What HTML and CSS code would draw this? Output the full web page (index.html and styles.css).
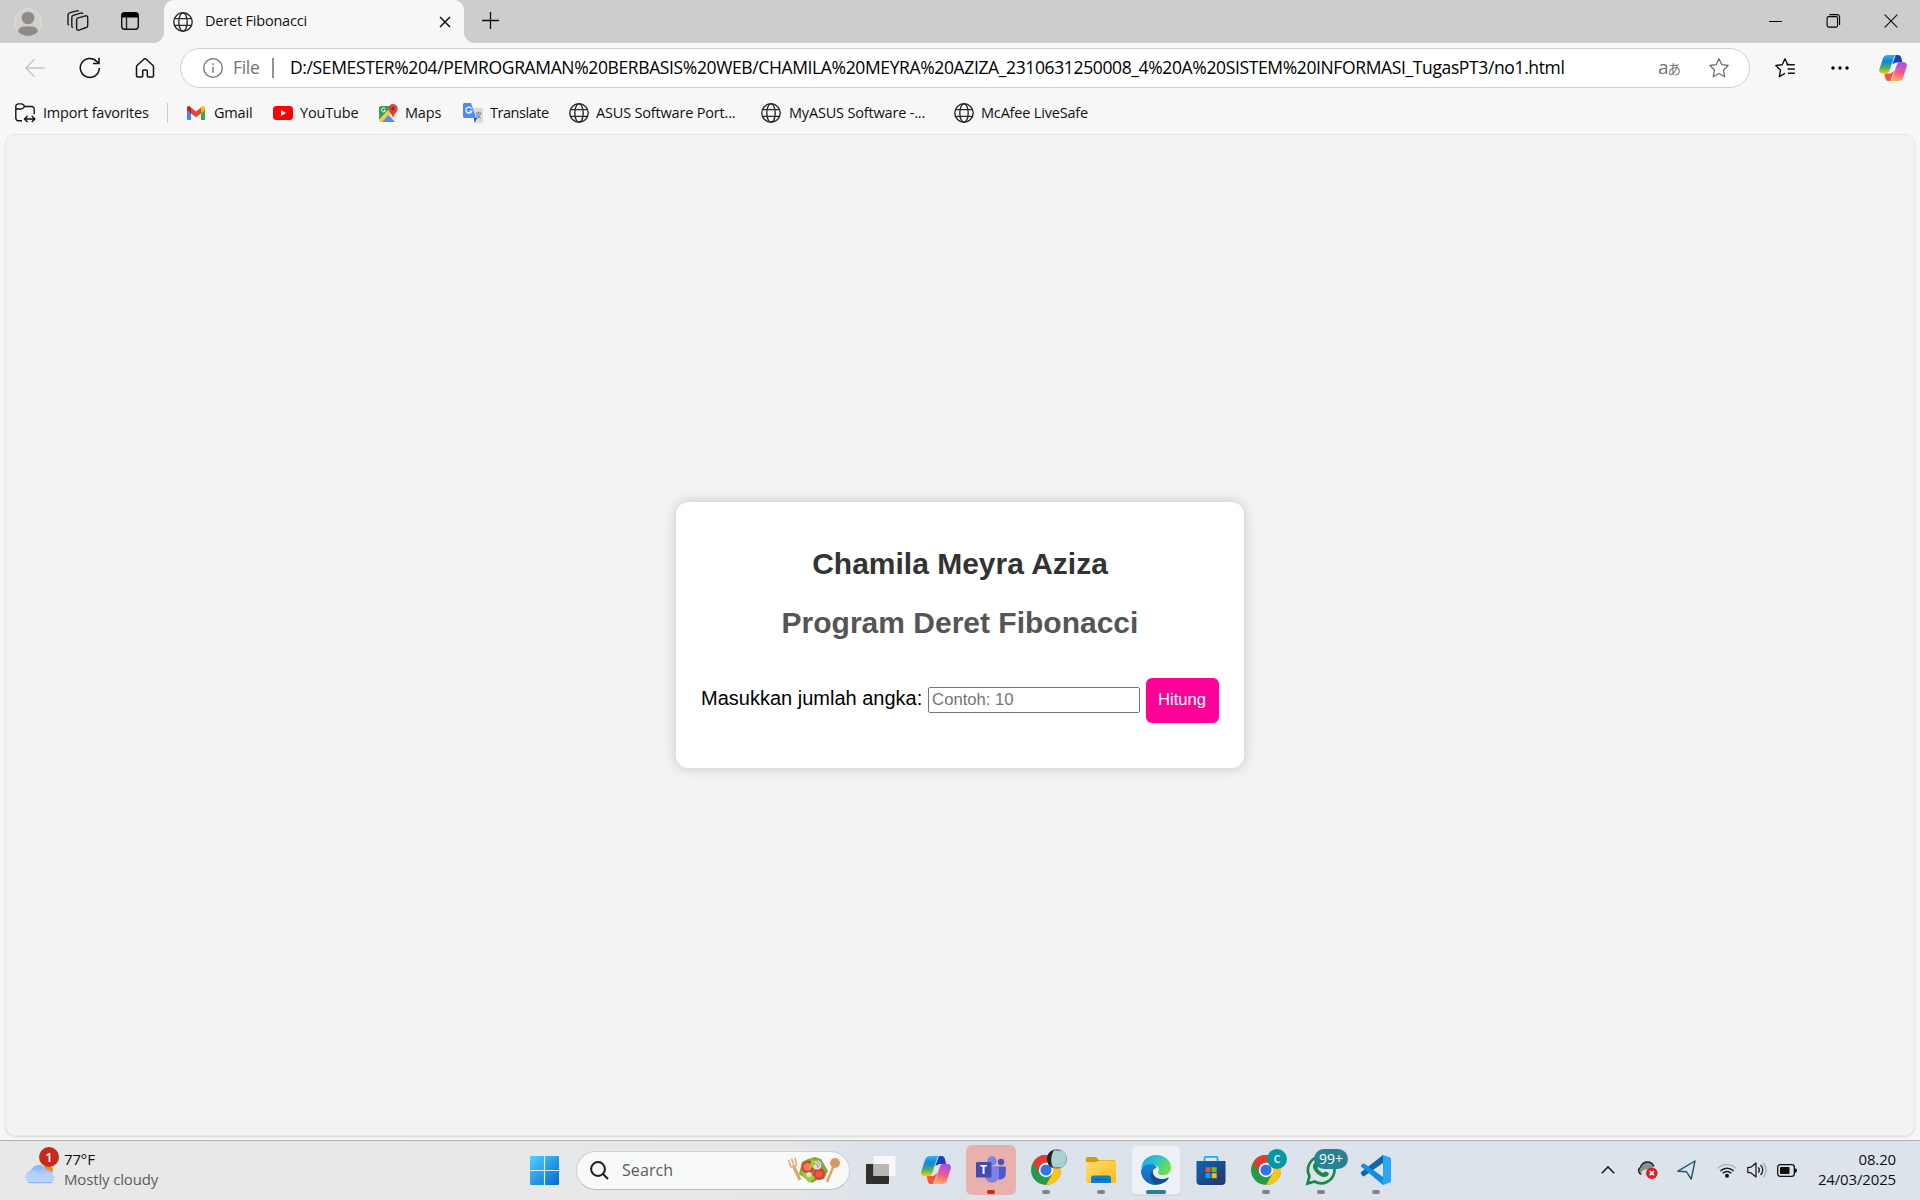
FILE: index.html
```html
<!DOCTYPE html>
<html lang="id">
<head>
<meta charset="utf-8">
<title>Deret Fibonacci</title>
<link rel="stylesheet" href="styles.css">
</head>
<body>
<svg class="defs" aria-hidden="true">
  <defs>
    <linearGradient id="cpBlue" x1="0" y1="0" x2="0" y2="1"><stop offset="0" stop-color="#25b5f0"/><stop offset=".35" stop-color="#1383e0"/><stop offset=".7" stop-color="#52b45b"/><stop offset="1" stop-color="#ffd000"/></linearGradient>
    <linearGradient id="cpPink" x1=".6" y1="0" x2=".3" y2="1"><stop offset="0" stop-color="#a350ee"/><stop offset=".5" stop-color="#f0598c"/><stop offset="1" stop-color="#ffb15c"/></linearGradient>
    <linearGradient id="win" x1="0" y1="0" x2="1" y2="1"><stop offset="0" stop-color="#4fd4fb"/><stop offset="1" stop-color="#0068d0"/></linearGradient>
    <linearGradient id="cloud" x1="0" y1="0" x2="0" y2="1"><stop offset="0" stop-color="#8db3f3"/><stop offset="1" stop-color="#d2e3fc"/></linearGradient>
    <linearGradient id="folder" x1="0" y1="0" x2="1" y2="1"><stop offset="0" stop-color="#ffdf72"/><stop offset="1" stop-color="#fbb812"/></linearGradient>
    <linearGradient id="store" x1="0" y1="0" x2="1" y2="1"><stop offset="0" stop-color="#0a65b8"/><stop offset="1" stop-color="#28345f"/></linearGradient>
    <linearGradient id="edgeTop" x1="0" y1="0" x2="1" y2=".5"><stop offset="0" stop-color="#1b9fe0"/><stop offset=".5" stop-color="#2fc3cf"/><stop offset="1" stop-color="#6ee04c"/></linearGradient>
    <linearGradient id="edgeMid" x1="0" y1="0" x2="0" y2="1"><stop offset="0" stop-color="#1688d8"/><stop offset="1" stop-color="#1061b4"/></linearGradient>
    <symbol id="globe" viewBox="0 0 20 20"><g fill="none" stroke="#2b2b2b" stroke-width="1.4"><circle cx="10" cy="10" r="9.2"/><ellipse cx="10" cy="10" rx="4.2" ry="9.2"/><path d="M1.6 6.6h16.8M1.6 13.4h16.8"/></g></symbol>
    <symbol id="copilot" viewBox="0 0 30 28">
      <path d="M18 0h2.500c2.200 0 3 1.500 3.700 4l1 4h-7l-4 2z" fill="#1b3fc4"/>
      <path d="M12 28H9.500C7.300 28 7 26 6.300 23l-.8-3h7l4-3z" fill="#f2573d"/>
      <path d="M9.500 0h9.500c-2 0-2.800 1.500-3.500 4l-4 12c-.8 3-2.200 4.300-4.500 4.300H4c-3 0-4.500-2-3.700-5L4 4c.8-2.700 2.500-4 5.500-4z" fill="url(#cpBlue)"/>
      <path d="M20.500 28H11c2 0 2.800-1.500 3.500-4l4-12c.8-3 2.200-4.300 4.500-4.300h3c3 0 4.500 2 3.700 5L26 24c-.8 2.700-2.500 4-5.500 4z" fill="url(#cpPink)"/>
    </symbol>
    <symbol id="chrome" viewBox="0 0 30 30">
      <circle cx="15" cy="15" r="15" fill="#259b49"/>
      <path d="M2 7.500A15 15 0 0 1 28 7.500H15L8.500 18.700z" fill="#e23b30"/>
      <path d="M28 7.500A15 15 0 0 1 15 30l6.500-11.300L15 7.500z" fill="#fcc31b"/>
      <circle cx="15" cy="15" r="7.200" fill="#fff"/><circle cx="15" cy="15" r="5.600" fill="#2f75e6"/>
    </symbol>
  </defs>
</svg>

<header class="tabbar">
  <svg class="avatar" viewBox="0 0 28 28"><circle cx="14" cy="14" r="13.300" fill="#d3d0cd" stroke="#e0ddda"/><circle cx="14" cy="10" r="6.300" fill="#8f8b88"/><path d="M4 23.500C4.500 20 7.500 18.500 10 18.500h8c2.500 0 5.500 1.500 6 5a13.500 13.500 0 0 1-20 0z" fill="#8f8b88"/></svg>
  <svg class="spaces" viewBox="0 0 22 22" fill="none" stroke="#1c1c1c" stroke-width="1.400" stroke-linejoin="round"><path d="M10.500 8.200l8-2.300c1.200-.3 2.200.3 2.200 1.500v8c0 1-.5 1.800-1.500 2.100l-7.400 2.600c-1.300.4-2.200-.3-2.200-1.500v-8.200c0-1.100.1-1.900.9-2.200z"/><path d="M6 17.500c-.8-.2-1.200-.8-1.200-1.600V7.400c0-1 .5-1.800 1.500-2.100l7.500-2.200c1-.3 1.800 0 2.200.7"/><path d="M2 15c-.7-.2-1-.8-1-1.600V5c0-1 .5-1.800 1.500-2.100L9.500.9c1-.3 1.700 0 2.100.5"/></svg>
  <svg class="tabmenu" viewBox="0 0 20 20"><rect x="1.700" y="1.700" width="16.600" height="16.600" rx="3" fill="none" stroke="#111" stroke-width="1.400"/><path d="M1.700 6.500V4.500a3 3 0 0 1 3-3h10.600a3 3 0 0 1 3 3v2z" fill="#000"/><path d="M6.500 6v12" stroke="#222" stroke-width="1.400"/></svg>
  <div class="tab">
    <svg class="i20"><use href="#globe"/></svg>
    <span class="tab-title">Deret Fibonacci</span>
    <svg class="tab-close" viewBox="0 0 12 12"><path d="M1 1l10 10M11 1L1 11" stroke="#111" stroke-width="1.500"/></svg>
  </div>
  <svg class="newtab" viewBox="0 0 18 18"><path d="M8.500 0v17M0 8.500h17" stroke="#111" stroke-width="1.300"/></svg>
  <div class="winbtns">
    <svg viewBox="0 0 14 14"><path d="M1 7.500h13" stroke="#000" stroke-width="1"/></svg>
    <svg viewBox="0 0 14 14" fill="none" stroke="#000" stroke-width="1.100"><rect x="1.100" y="2.600" width="10.500" height="10.500" rx="1.500"/><path d="M3.500 .6h7.500a2.500 2.500 0 0 1 2.600 2.500V11"/></svg>
    <svg viewBox="0 0 14 14"><path d="M.7.700l12.600 12.600M13.300.700L.7 13.300" stroke="#111" stroke-width="1.200"/></svg>
  </div>
</header>

<nav class="toolbar">
  <svg class="back" viewBox="0 0 20 20" fill="none" stroke="#c5c5c5" stroke-width="1.300"><path d="M19.500 10H1M9.500 1.200L.9 10l8.600 8.800"/></svg>
  <svg class="reload" viewBox="0 0 22 22" fill="none" stroke="#111" stroke-width="1.500"><path d="M20.300 11a9.500 9.500 0 1 1-2.500-6.500L20 6.400M20 .8v5.700h-6"/></svg>
  <svg class="home" viewBox="0 0 20 20" fill="none" stroke="#111" stroke-width="1.500" stroke-linejoin="round"><path d="M1.500 9c0-.7.300-1.300.8-1.800L8.800 1.300c.7-.6 1.700-.6 2.400 0l6.500 5.900c.5.500.8 1.100.8 1.800v8.700c0 .8-.5 1.300-1.300 1.300h-3.600c-.8 0-1.300-.5-1.300-1.300V13c0-.7-.4-1.100-1.100-1.100H8.800c-.7 0-1.100.4-1.100 1.100v4.700c0 .8-.5 1.300-1.300 1.300H2.800c-.8 0-1.300-.5-1.300-1.300z"/></svg>
  <div class="omnibox">
    <svg class="i20" viewBox="0 0 20 20"><circle cx="10" cy="10" r="9.300" fill="none" stroke="#737373" stroke-width="1.300"/><path d="M10 8.700v6M10 5.300v1.600" stroke="#737373" stroke-width="1.400"/></svg>
    <span class="scheme">File</span><span class="bar"></span>
    <span class="url">D:/SEMESTER%204/PEMROGRAMAN%20BERBASIS%20WEB/CHAMILA%20MEYRA%20AZIZA_2310631250008_4%20A%20SISTEM%20INFORMASI_TugasPT3/no1.html</span>
    <span class="read">a<small>あ</small></span>
    <svg class="i20 star" viewBox="0 0 20 20"><path d="M10 .8l2.800 5.900 6.400.8-4.700 4.500 1.200 6.700L10 15.500l-5.700 3.200L5.500 12 .800 7.500l6.400-.8z" fill="none" stroke="#707070" stroke-width="1.300" stroke-linejoin="round"/></svg>
  </div>
  <svg class="favs" viewBox="0 0 20 20" fill="none" stroke="#111" stroke-width="1.400" stroke-linejoin="round"><path d="M14.500 6.500l-2-.2L10 .8 7.200 6.700l-6.400.8L5.500 12l-1.200 6.700L10 15.300M11.500 6.700h8.300M12.500 11h7.300M13 15.200h6.800"/></svg>
  <svg class="more" viewBox="0 0 18 4"><circle cx="2" cy="2" r="1.700"/><circle cx="9" cy="2" r="1.700"/><circle cx="16" cy="2" r="1.700"/></svg>
  <svg class="sidecop"><use href="#copilot"/></svg>
</nav>

<nav class="bookmarks">
  <div class="bm bm-import"><svg class="i20" viewBox="0 0 20 20" fill="none" stroke="#111" stroke-width="1.400"><path d="M7 17.700H3.500A2.600 2.600 0 0 1 .8 15V3.500C.8 2 2 .900 3.500.900h2.700c1 0 1.700.5 2.300 1.200L10 3.500h6.500A2.600 2.600 0 0 1 19.200 6v5M.8 6h5.300c1 0 1.500-.3 2-.9L9.700 3.500M10 16h9.500M12.500 13l-3 3 3 3M16.800 13l3 3-3 3"/></svg><span>Import favorites</span></div>
  <span class="bm-sep"></span>
  <div class="bm bm-gmail"><svg viewBox="0 0 18 14"><path d="M0 2v11c0 .6.400 1 1 1h3V6z" fill="#4285f4"/><path d="M18 2v11c0 .6-.4 1-1 1h-3V6z" fill="#34a853"/><path d="M14 6V1.500L15 .600c1.300-1 3-.1 3 1.500V4l-4 3.500z" fill="#fbbc04"/><path d="M4 7.500v-6l5 4 5-4v6l-5 3.800z" fill="#ea4335"/><path d="M0 4V2C0 .4 1.700-.5 3 .6l1 .9v6z" fill="#c5221f"/></svg><span>Gmail</span></div>
  <div class="bm bm-yt"><svg viewBox="0 0 20 14"><rect width="20" height="14" rx="3.500" fill="#f00"/><path d="M8 4v6l5-3z" fill="#fff"/></svg><span>YouTube</span></div>
  <div class="bm bm-maps"><svg viewBox="0 0 19 19"><rect y="2" width="17" height="16" rx="2" fill="#e8eaed"/><path d="M0 4c0-1.300.7-2 2-2h11L0 16z" fill="#34a15a"/><path d="M0 16L13 3l3 3L3 18H2c-1.300 0-2-.7-2-2z" fill="#fbcb3b"/><path d="M3 18l6.500-7L16 18z" fill="#4c8df6"/><path d="M11 9.500l6 7V7z" fill="#dadce0"/><path d="M14 0a4.700 4.700 0 0 1 4.700 4.700C18.700 8 15 9 14 14c-1-5-4.700-6-4.700-9.300A4.700 4.700 0 0 1 14 0z" fill="#dc4437"/><circle cx="14" cy="4.700" r="1.600" fill="#8c241e"/><path d="M6 4.500a2 2 0 1 0 .5 2H5" stroke="#fff" fill="none"/></svg><span>Maps</span></div>
  <div class="bm bm-trans"><svg viewBox="0 0 20 20"><path d="M8 5h10.500c.8 0 1.500.7 1.500 1.500V18.500c0 .8-.7 1.500-1.500 1.500H12z" fill="#dcdcdc"/><path d="M11 15h3l-2.500 5z" fill="#3349b8"/><path d="M1.500 0H8l5 15H1.500C.7 15 0 14.300 0 13.500v-12C0 .7.700 0 1.500 0z" fill="#4b8bf5"/><path d="M8.500 5.500a3 3 0 1 0 .3 2.500H6.300" fill="none" stroke="#fff" stroke-width="1.200"/><path d="M12.500 10h6M15.500 8.500V10c.2 3-3 5-3 5M13.500 11c.7 2 3 4 4.500 4.500M17.500 10c-.3 3-2 5-4 6" fill="none" stroke="#75869b"/></svg><span>Translate</span></div>
  <div class="bm bm-asus"><svg class="i20"><use href="#globe"/></svg><span>ASUS Software Port...</span></div>
  <div class="bm bm-my"><svg class="i20"><use href="#globe"/></svg><span>MyASUS Software -...</span></div>
  <div class="bm bm-mc"><svg class="i20"><use href="#globe"/></svg><span>McAfee LiveSafe</span></div>
</nav>

<main class="viewport">
  <section class="card">
    <h2>Chamila Meyra Aziza</h2>
    <h2 class="sub">Program Deret Fibonacci</h2>
    <form class="row" onsubmit="return false">
      <label for="n">Masukkan jumlah angka:</label>
      <input id="n" type="text" placeholder="Contoh: 10">
      <button>Hitung</button>
    </form>
  </section>
</main>

<footer class="taskbar">
  <div class="weather">
    <div class="wicon"><svg viewBox="0 0 30 20"><circle cx="23" cy="6" r="5" fill="#f5871f"/><path d="M7 19.500A6.500 6.500 0 0 1 5.500 7 9 9 0 0 1 22 6a7 7 0 0 1 2 13.500z" fill="url(#cloud)"/><path d="M7 19.500A6.500 6.500 0 1 1 12 9c2 1.500 3 3 5 2 4-4 13-2 12.500 3.500-.3 3-2.500 5-5.500 5z" fill="#b6d0fa" opacity=".75"/><path d="M3 18.500h24" stroke="#91b1ee"/></svg><b>1</b></div>
    <div class="wtext"><span>77°F</span><span class="dim">Mostly cloudy</span></div>
  </div>
  <svg class="start" viewBox="0 0 29 29" fill="url(#win)"><path d="M1 0h12.900v13.900H0V1a1 1 0 0 1 1-1zM15.100 0H28a1 1 0 0 1 1 1v12.900H15.100zM0 15.100h13.900V29H1a1 1 0 0 1-1-1zM15.100 15.100H29V28a1 1 0 0 1-1 1H15.100z"/></svg>
  <div class="search">
    <svg class="glass" viewBox="0 0 19 19" fill="none" stroke="#1d1d1d" stroke-width="2"><circle cx="8" cy="8" r="6.900"/><path d="M13 13l5 5"/></svg>
    <span>Search</span>
    <svg class="salad" viewBox="0 0 52 26"><path d="M5 8l7 15" stroke="#dda36b" stroke-width="3"/><path d="M.5 3l2 6c1 2 6 1 6-1L7 1M3.500 1.500l2 6" fill="none" stroke="#e7b27d" stroke-width="1.800"/><path d="M46 8l-7 17" stroke="#dda36b" stroke-width="2.500"/><circle cx="47" cy="6" r="5" fill="#d9995f"/><path d="M11 17l3-12 6-3 7-2 6 2 3 5 4 7-4 8-7 1-5 3-6-4z" fill="#79ad2f"/><circle cx="20" cy="10" r="6.500" fill="#df3e2c"/><circle cx="31" cy="17" r="6" fill="#df3e2c"/><circle cx="19.500" cy="10" r="4" fill="#f27a57"/><circle cx="31" cy="17" r="3.500" fill="#e9593f"/><circle cx="29" cy="8" r="4.500" fill="#eadbe8"/><path d="M26 6c2 0 4 2 4 5M28 4c2 1 4 3 4 5" stroke="#a86a9d" fill="none"/><path d="M24 1l-3 12 7-6zM12 15l7 1 8 4-6 6z" fill="#9dcf3c"/><circle cx="21" cy="17.500" r="2.500" fill="#e9e0e9"/></svg>
  </div>
  <div class="apps">
    <div class="app"><svg class="wide" viewBox="0 0 30 28"><rect y="8" width="23" height="20" rx="1" fill="#30302f"/><rect x="7.500" width="22" height="20" rx="1" fill="#f8f8f8"/><path d="M7.500 8H23v12H7.500z" fill="#b8b8b8"/></svg></div>
    <div class="app"><svg class="wide"><use href="#copilot"/></svg></div>
    <div class="app teams"><svg class="wide" viewBox="0 0 30 28"><circle cx="25" cy="6" r="3.200" fill="#4b53bc"/><path d="M18 10.500h10.500c.8 0 1.300.5 1.300 1.300v6a6 6 0 0 1-8.800 5z" fill="#5059c9"/><circle cx="16" cy="5" r="4.700" fill="#7b83eb"/><path d="M11 10.500h10.500c1 0 1.500.6 1.500 1.500v7.500c0 4-3.200 7.200-6.800 7.200S9 24 9 20z" fill="#7b83eb"/><rect y="6" width="15.500" height="15.500" rx="1.300" fill="#434aad"/></svg><b class="tee">T</b><i class="dot red"></i></div>
    <div class="app"><svg class="sq"><use href="#chrome"/></svg><svg class="pfp" viewBox="0 0 20 20"><circle cx="10" cy="10" r="10" fill="#8a8590"/><path d="M5 2h10c3 0 4 4 4 8s-2 8-5 8H9c-3 0-5-3-5-8z" fill="#a9d2d4"/><path d="M7 1C2 2 0 6 0 10c0 4 2 8 6 9-3-5-2-13 1-18z" fill="#252228"/></svg><i class="dot"></i></div>
    <div class="app"><svg class="wide" viewBox="0 0 30 28"><path d="M0 3c0-1.200.8-2 2-2h7c1 0 2 .6 2.500 1.500L13 4h16v6H0z" fill="#dc9a09"/><path d="M0 6h10c1.500 0 2-1.500 4-1.500h14c1.200 0 2 .8 2 2V25c0 1.200-.8 2-2 2H2c-1.200 0-2-.8-2-2z" fill="url(#folder)"/><path d="M5 22c0-1.600 1-2.600 2.600-2.600h14.800c1.600 0 2.600 1 2.600 2.600v5H5z" fill="#117dcc"/><path d="M8.500 23.500h13" stroke="#07548e"/></svg><i class="dot"></i></div>
    <div class="app active"><svg class="sq" viewBox="0 0 30 30"><path d="M.2 13C1.500 5 7.500 0 15 0c9 0 15 6 15 12.500 0 5-3.500 7.800-8 7.800-3.500 0-5-1-5-2.200 0-.8 1-1.300 1-3.300 0-2.500-2.600-5-6.500-5-5 0-9.500 3-11.300 3.200z" fill="url(#edgeTop)"/><path d="M12 9C5.500 8.500 0 12 0 16c0 7.500 6.500 14 14.500 14 2 0 4-.5 5-.9C10 28 7.500 19 12.500 14.500c.8-.8 2-1.500 3.500-1.500-1-2.200-2.500-3.700-4-4z" fill="url(#edgeMid)"/><path d="M12.500 14C8.500 17 8 24 13.500 28c2 1.500 5 1.500 7 .8 3-1 5.500-3 7-5.300.4-.7-.1-1.100-.7-.8C20 26 12.500 23 11.800 17c-.1-1 .1-2 .7-3z" fill="#104f96"/></svg><i class="dot teal"></i></div>
    <div class="app"><svg class="sq" viewBox="0 0 30 30"><path d="M8.500 6.500V3c0-.7.500-1.200 1.200-1.200h10.600c.7 0 1.200.5 1.200 1.200v3.500" fill="none" stroke="#22aaf1" stroke-width="1.800"/><path d="M.5 6h29v20a4 4 0 0 1-4 4h-21a4 4 0 0 1-4-4z" fill="url(#store)"/><path d="M9.500 12.200h5v5h-5z" fill="#f25022"/><path d="M15.700 12.200h5v5h-5z" fill="#7fba00"/><path d="M9.500 18.200h5v5h-5z" fill="#00a4ef"/><path d="M15.700 18.200h5v5h-5z" fill="#ffb900"/></svg></div>
    <div class="app"><svg class="sq"><use href="#chrome"/></svg><b class="cbadge">C</b><i class="dot"></i></div>
    <div class="app"><svg class="sq" viewBox="0 0 30 30"><path d="M1.500 28.500l2-7.300A13.300 13.300 0 1 1 8.700 26.500z" fill="none" stroke="#178a4b" stroke-width="2.700"/><path d="M9 7.500c2-1 2.500 0 3.500 3 .3 1-1.300 2-1 2.500 1.300 2.500 3 3.800 5.500 5 .8.300 1.500-2 2.500-1.500 3 1.300 3.700 1.500 3.300 2.500-1 3-4 3.500-6.500 2.700C11.500 20 8 16 7 12.500c-.5-2 .5-4 2-5z" fill="#178a4b"/></svg><b class="count">99+</b><i class="dot"></i></div>
    <div class="app"><svg class="sq" viewBox="0 0 30 30"><path d="M0 18.700c-.4-.5-.3-1.100.2-1.600L22 0v8L3.500 21c-.7.500-1.400.5-2-.1z" fill="#0f68aa"/><path d="M0 11.500L22 30V21.900L3.500 8.800c-.7-.5-1.300-.4-2 .2L.3 10.100c-.5.500-.5 1-.3 1.400z" fill="#168dd8"/><path d="M22 0l6.600 2.200c.9.400 1.400 1 1.400 2v21.600c0 1-.5 1.600-1.400 2L22 30z" fill="#2ba6f3"/></svg><i class="dot"></i></div>
  </div>
  <div class="tray">
    <svg class="chev" viewBox="0 0 14 8"><path d="M.8 7.200L7 1l6.200 6.200" fill="none" stroke="#222" stroke-width="1.600"/></svg>
    <svg class="drive" viewBox="0 0 21 18"><path d="M4.500 13.500A4.200 4.200 0 0 1 3.500 6C5 2.500 7.500 1 10.500 1c3 0 5.500 2 6.500 4.500" fill="#8e8e8e" stroke="#222" stroke-width="1.300"/><path d="M4.500 13.500c-1-3 2-5 5-5L17 6l-3 8z" fill="#ddd"/><circle cx="14.800" cy="12.200" r="5.800" fill="#dc1f2e"/><path d="M12.700 10.100l4.200 4.200M16.900 10.100l-4.200 4.200" stroke="#fff" stroke-width="1.600"/></svg>
    <svg class="loc" viewBox="0 0 19 20"><path d="M18 1L.9 11.200l8.600.6 4.700 7.200z" fill="none" stroke="#1e5666" stroke-width="1.400" stroke-linejoin="round"/></svg>
    <svg class="wifi" viewBox="0 0 20 15" fill="none" stroke-width="1.300"><path d="M.8 5.500a13 13 0 0 1 18.400 0" stroke="#aaafb4"/><path d="M3.300 8a9.500 9.500 0 0 1 13.400 0M5.700 10.300a6 6 0 0 1 8.600 0" stroke="#222"/><circle cx="10" cy="12.800" r="2" fill="#111"/></svg>
    <svg class="vol" viewBox="0 0 20 16" fill="none" stroke="#222" stroke-width="1.300"><path d="M.8 5.300h3L9 1v14l-5.200-4.300h-3z" stroke-linejoin="round"/><path d="M11.300 5.300c1.300 1.600 1.300 3.800 0 5.400M13.600 3c2.600 3 2.600 7 0 10"/><path d="M16 .8c4 4 4 10.400 0 14.400" stroke="#aaafb4"/></svg>
    <svg class="bat" viewBox="0 0 20 13"><rect x=".7" y=".7" width="16.600" height="11.600" rx="2.500" fill="none" stroke="#111" stroke-width="1.300"/><rect x="3" y="3" width="9.500" height="7" rx=".8" fill="#111"/><path d="M17.500 4.200c1.500 0 2.500.8 2.500 2.300s-1 2.300-2.500 2.300z" fill="#111"/></svg>
    <div class="clock"><span class="time">08.20</span><span class="date">24/03/2025</span></div>
  </div>
</footer>
</body>
</html>
```
FILE: styles.css
```css
* { box-sizing: border-box; }
body {
  margin: 0;
  width: 1920px;
  height: 1200px;
  overflow: hidden;
  display: flex;
  flex-direction: column;
  background: #f7f7f7;
  color: #111;
  font-family: "Open Sans", "Noto Sans", sans-serif;
}
svg { display: block; flex: none; overflow: visible; }
span { white-space: nowrap; }
.defs { position: absolute; width: 0; height: 0; }
.i20 { width: 20px; height: 20px; }

/* Tab strip */
.tabbar { height: 43px; flex: none; display: flex; align-items: center; background: #cdcdcd; padding-left: 14px; }
.avatar { width: 28px; height: 28px; }
.spaces { width: 22px; height: 22px; margin-left: 25px; margin-bottom: 1px; }
.tabmenu { width: 20px; height: 20px; margin: 0 24px 1px 31px; }
.tab {
  position: relative;
  width: 300px; height: 43px;
  display: flex; align-items: center;
  padding: 0 13px 0 9px;
  background: #f7f7f7;
  border-radius: 10px 10px 0 0;
}
.tab::before, .tab::after {
  content: ""; position: absolute; bottom: 0; width: 10px; height: 10px;
}
.tab::before { left: -10px; background: radial-gradient(circle at 0 0, transparent 9.5px, #f7f7f7 10px); }
.tab::after { right: -10px; background: radial-gradient(circle at 100% 0, transparent 9.5px, #f7f7f7 10px); }
.tab-title { margin-left: 12px; padding-bottom: 2px; font-size: 14.500px; letter-spacing: -.2px; }
.tab-close { width: 12px; height: 12px; margin-left: auto; }
.newtab { width: 18px; height: 18px; margin-left: 18px; margin-bottom: 1px; }
.winbtns { margin-left: auto; display: flex; gap: 44px; padding: 0 22px 1px 0; }
.winbtns svg { width: 14px; height: 14px; }

/* Address row */
.toolbar { height: 50px; flex: none; display: flex; align-items: center; padding-left: 25px; }
.back { width: 20px; height: 20px; }
.reload { width: 22px; height: 22px; margin-left: 34px; }
.home { width: 20px; height: 20px; margin: 0 25px 0 34px; }
.omnibox {
  width: 1570px; height: 40px;
  display: flex; align-items: center;
  padding: 0 20px 0 22px;
  background: #fff; border: 1px solid #cfcfcf; border-radius: 20px;
}
.scheme { width: 39px; margin-left: 10px; padding-bottom: 2px; font-size: 17.500px; letter-spacing: -.3px; color: #737373; }
.bar { width: 2px; height: 20px; background: #929292; }
.url { margin-left: 16px; padding-bottom: 2px; font-size: 17.500px; letter-spacing: -.37px; color: #000; }
.read { margin-left: auto; padding-bottom: 2px; font-size: 19px; line-height: 22px; color: #757575; }
.read small { font-family: "Noto Sans CJK JP", sans-serif; font-size: 13.500px; line-height: 1; margin-left: -1px; }
.star { margin-left: 28px; }
.favs { width: 20px; height: 20px; margin-left: 25px; }
.more { width: 18px; height: 4px; margin-left: 36px; }
.sidecop { width: 28px; height: 26px; margin-left: 30px; }

/* Favorites row */
.bookmarks { height: 41px; flex: none; display: flex; align-items: center; padding: 0 0 1px 15px; font-size: 14.500px; }
.bm { display: flex; align-items: center; gap: 8px; flex: none; letter-spacing: -.18px; }
.bm span { padding-bottom: 2px; }
.bm-import { width: 152px; gap: 8px; }
.bm-sep { width: 1px; height: 20px; background: #c9c9c9; margin-right: 19px; }
.bm-gmail { width: 86px; gap: 9px; }
.bm-gmail svg { width: 18px; height: 14px; }
.bm-yt { width: 106px; gap: 7px; }
.bm-yt svg { width: 20px; height: 14px; }
.bm-maps { width: 84px; gap: 7px; }
.bm-maps svg { width: 19px; height: 19px; }
.bm-trans { width: 106px; gap: 7px; letter-spacing: -.45px; }
.bm-trans svg { width: 20px; height: 20px; }
.bm-asus { width: 192px; gap: 7px; }
.bm-my { width: 193px; }
.bm-mc { gap: 7px; }

/* Page */
.viewport {
  height: 1002px; flex: none;
  margin: 0 5px 4px;
  display: flex; align-items: center; justify-content: center;
  background: #f3f3f3;
  border: 1px solid #e8e8e8; border-radius: 10px;
  box-shadow: 0 1px 2px #d8d8d8;
  font-family: "Liberation Sans", Arial, sans-serif;
}
.card {
  width: 568px; height: 266px;
  padding: 25px;
  background: #fff; border-radius: 12.500px;
  box-shadow: 0 0 12.500px rgba(0, 0, 0, .2);
  text-align: center;
}
.card h2 { margin: 20px 0 25px; font-size: 30px; line-height: 34px; color: #333; }
.card .sub { margin: 0 0 38px; color: #555; }
.row { display: flex; align-items: center; justify-content: space-between; font-size: 20px; color: #000; }
.row label { line-height: 23px; margin-top: -4px; }
.row input { width: 212px; height: 26px; padding: 1px 3px; border: 1px solid #767676; border-radius: 2px; font: 16.667px "Liberation Sans", Arial, sans-serif; margin: 0 0 2px; }
.row input::placeholder { color: #757575; }
.row button { width: 73px; height: 45px; padding: 0 1px 2px 0; border: 0; border-radius: 6px; background: #ff0099; color: #fff; font: 16.667px "Liberation Sans", Arial, sans-serif; }

/* Taskbar */
.taskbar {
  height: 60px; flex: none;
  display: flex; align-items: center;
  padding-bottom: 1px;
  border-top: 1px solid #b0b3b5;
  background: linear-gradient(90deg, #e8e8e8 0, #e6e7e8 780px, #dce2ea 880px, #dce3eb 100%);
}
.weather { display: flex; width: 505px; padding-left: 25px; }
.wicon { position: relative; width: 30px; height: 44px; padding-top: 16px; margin-right: 9px; }
.wicon svg { width: 30px; height: 20px; }
.wicon b { position: absolute; left: 14px; top: -1px; width: 20px; height: 20px; border-radius: 50%; background: #c42b1c; color: #fff; font-size: 13px; line-height: 20px; text-align: center; font-weight: 600; }
.wtext { display: flex; flex-direction: column; font-size: 15px; line-height: 20px; padding-top: 1px; letter-spacing: -.15px; }
.dim { color: #5d5d5d; }
.start { width: 29px; height: 29px; margin-left: 25px; }
.search {
  width: 274px; height: 39px; margin-left: 17px;
  display: flex; align-items: center; padding: 0 9px 0 13px;
  background: #f8f9f9; border: 1px solid #cfd0d2; border-bottom-color: #b9bbbd; border-radius: 20px;
  font-size: 16px; color: #5c5c5c;
}
.search span { margin-left: 13px; padding-bottom: 1px; letter-spacing: .1px; }
.glass { width: 19px; height: 19px; }
.salad { width: 52px; height: 26px; margin-left: auto; }
.apps { display: flex; gap: 5px; margin-left: 6px; }
.app { position: relative; width: 50px; height: 50px; display: flex; align-items: center; justify-content: center; border-radius: 6px; }
.wide { width: 30px; height: 28px; }
.sq { width: 30px; height: 30px; }
.teams { background: #e9b0ad; }
.active { background: #edf1f5; box-shadow: inset 0 0 0 1px #dce2ea, 0 1px 1px #cdd2d8; }
.tee { position: absolute; left: 10px; top: 17px; width: 15px; text-align: center; color: #fff; font-size: 12px; line-height: 16px; }
.dot { position: absolute; bottom: 1px; left: 21px; width: 8px; height: 4px; border-radius: 2px; background: #808285; }
.red { background: #c42b1c; }
.teal { left: 15px; width: 20px; background: #288092; }
.pfp { position: absolute; left: 26px; top: 4px; width: 20px; height: 20px; }
.cbadge { position: absolute; left: 26px; top: 4px; width: 20px; height: 20px; border-radius: 50%; background: #0797a4; color: #c4ecec; font-size: 11px; line-height: 20px; text-align: center; }
.count { position: absolute; left: 18px; top: 4px; width: 34px; height: 20px; border-radius: 10px; background: #288092; color: #fff; font-size: 14px; line-height: 20px; text-align: center; font-weight: 400; }
.tray { margin-left: auto; display: flex; align-items: center; padding-right: 24px; }
.chev { width: 14px; height: 8px; margin-right: 22px; }
.drive { width: 21px; height: 18px; margin-right: 19px; }
.loc { width: 19px; height: 20px; margin-right: 21px; }
.wifi { width: 20px; height: 15px; margin-right: 10px; }
.vol { width: 20px; height: 16px; margin-right: 10px; }
.bat { width: 20px; height: 13px; }
.clock { width: 99px; display: flex; flex-direction: column; align-items: flex-end; padding-bottom: 3px; font-size: 15px; line-height: 20px; letter-spacing: -.15px; }
```
